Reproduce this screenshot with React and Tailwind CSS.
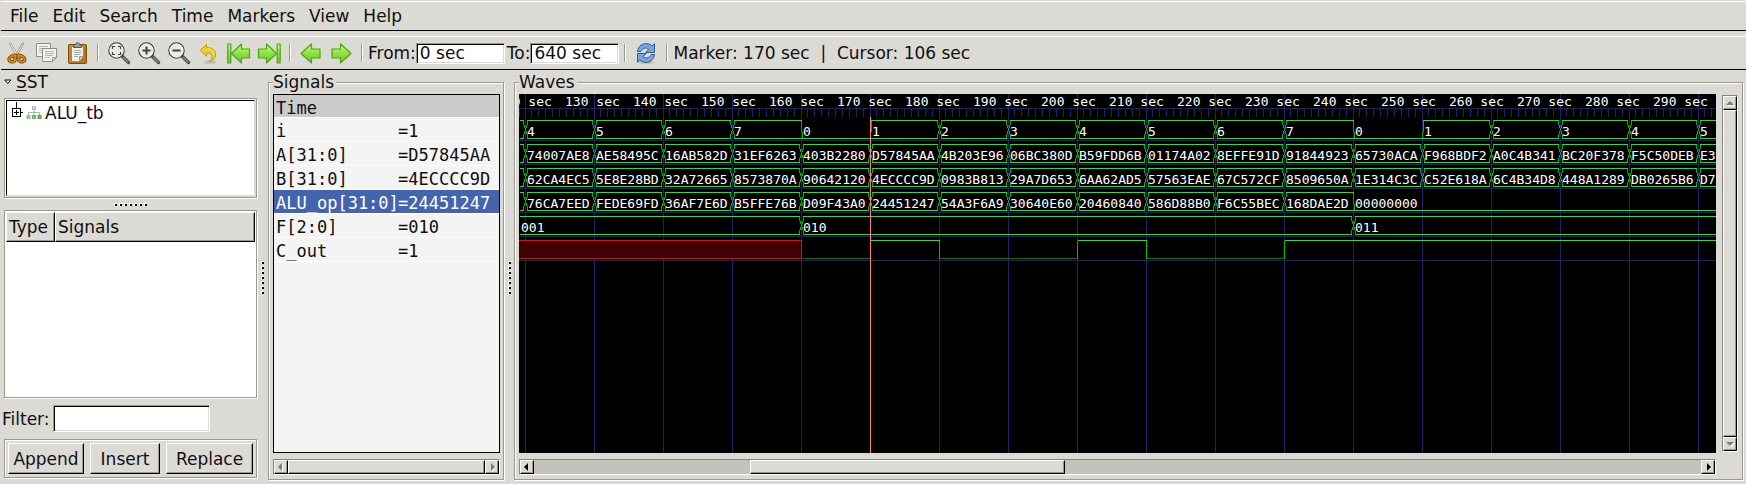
import React from 'react';

const etched = 'border border-[#9a988f] shadow-[1px_1px_0_#fff,inset_1px_1px_0_#fff]';
const raised =
  'border border-t-white border-l-white border-r-black border-b-black shadow-[inset_-1px_-1px_0_#9a988f] bg-[#dcdad5]';
const sunken =
  'border border-t-[#9a988f] border-l-[#9a988f] border-r-white border-b-white shadow-[inset_1px_1px_0_#000,inset_-1px_-1px_0_#dcdad5] bg-white';

/* ---------- toolbar icons ---------- */

function Icon({ children }) {
  return (
    <svg viewBox="0 0 24 24" className="h-6 w-6" aria-hidden="true">
      {children}
    </svg>
  );
}

const CutIcon = () => (
  <Icon>
    <path d="M4.2 2.2 5.6 2l8.3 13-1.8 1.6z" fill="#f4f4f2" stroke="#8c8e89" strokeWidth=".8" />
    <path d="M18.8 2.2 17.4 2 9.6 15l1.8 1.6z" fill="#e4e5e2" stroke="#8c8e89" strokeWidth=".8" />
    <g fill="none" strokeLinejoin="round">
      <path d="M10.6 14.2C9 14.8 4.6 14.8 4 18.6c-.2 2.6 5.600 3.200 6 .2z" stroke="#7a4700" strokeWidth="3.400" />
      <path d="M13.200 14.200c1.600.6 6 .6 6.600 4.400.2 2.600-5.600 3.200-6 .2z" stroke="#7a4700" strokeWidth="3.400" />
      <path d="M10.600 14.200C9 14.800 4.600 14.800 4 18.600c-.2 2.600 5.600 3.200 6 .2z" stroke="#d08a1c" strokeWidth="1.900" />
      <path d="M13.200 14.200c1.600.6 6 .6 6.600 4.400.2 2.600-5.600 3.200-6 .2z" stroke="#d08a1c" strokeWidth="1.900" />
    </g>
  </Icon>
);

function Sheet({ d, fold }) {
  return (
    <g strokeLinejoin="round">
      <path d={d} fill="#f2f2f0" stroke="#8b8d88" />
      <path d={fold} fill="#d3d4d0" stroke="#8b8d88" strokeWidth=".8" />
    </g>
  );
}

const CopyIcon = () => (
  <Icon>
    <Sheet d="M1.500 2.500h14v9l-3 4h-11z" fold="M15.500 11.500h-3v4z" />
    <path d="M4 5.500h9M4 7.500h9M4 9.500h6M4 11.500h6" stroke="#b5b6b2" fill="none" />
    <Sheet d="M7.500 7.500h14v9l-4 4h-10z" fold="M21.500 16.500h-4v4z" />
    <path d="M10 10.500h9M10 12.500h9M10 14.500h8M10 16.500h5" stroke="#b5b6b2" fill="none" />
  </Icon>
);

const PasteIcon = () => (
  <Icon>
    <rect x="3.500" y="3.500" width="18" height="19" rx="1" fill="#b87514" stroke="#7f4a05" />
    <path d="M5 21.500V5h15" stroke="#d39a44" fill="none" />
    <path d="M6.500 5.500h12v10l-4 5h-8z" fill="#f0f0ee" stroke="#8b8d88" />
    <path d="M18.500 15.500h-4v5z" fill="#c9cac6" stroke="#8b8d88" strokeWidth=".8" />
    <path d="M9 9.500h7M9 11.500h7M9 13.500h6M9 15.500h4" stroke="#a9aaa6" fill="none" />
    <path d="M8.500 6.500v-2l2-1c.4-2.600 3.600-2.600 4 0l2 1v2z" fill="#9b9c98" stroke="#555753" />
  </Icon>
);

function Magnifier({ children }) {
  return (
    <Icon>
      <path d="m15.500 15.500 6 6" stroke="#4b4e4a" strokeWidth="3.400" strokeLinecap="round" />
      <path d="m16.500 16.500 4.500 4.500" stroke="#8e918d" strokeWidth="1.200" strokeLinecap="round" />
      <circle cx="9.500" cy="9.500" r="7.600" fill="#e9ebe8" stroke="#3f423e" strokeWidth="1.300" />
      <circle cx="9.500" cy="9.500" r="6.600" fill="none" stroke="#fbfbfa" strokeWidth=".8" />
      {children}
    </Icon>
  );
}

const ZoomFitIcon = () => (
  <Magnifier>
    <path
      d="M5.500 8V5.500H8M11 5.500h2.500V8M13.500 11v2.500H11M8 13.500H5.500V11"
      fill="none"
      stroke="#3f423e"
      strokeWidth="1.200"
    />
  </Magnifier>
);
const ZoomInIcon = () => (
  <Magnifier>
    <path d="M5.500 9.500h8M9.500 5.500v8" stroke="#3f423e" strokeWidth="2" />
  </Magnifier>
);
const ZoomOutIcon = () => (
  <Magnifier>
    <path d="M5.500 9.500h8" stroke="#3f423e" strokeWidth="2" />
  </Magnifier>
);

const UndoIcon = () => (
  <Icon>
    <ellipse cx="13" cy="21" rx="6.500" ry="2" fill="#c4c2bb" />
    <path
      d="M3.200 9.300 9.500 3.500v3.200c6.500-.4 9.500 3.200 9 7.600-.3 3-2.800 5.600-6.300 6.500 2.600-2.600 3.200-4.600 2.500-6.600-.7-1.800-2.700-2.200-5.200-2v3.300z"
      fill="#f0cd28"
      stroke="#c09a10"
      strokeLinejoin="round"
    />
    <path d="M10.500 8c4.500-.2 6.800 2 6.600 5.600" stroke="#fbec94" fill="none" />
  </Icon>
);

function GreenDefs() {
  return (
    <svg width="0" height="0" className="absolute" aria-hidden="true">
      <defs>
        <linearGradient id="green" x1="0" y1="0" x2="0" y2="1">
          <stop offset="0" stopColor="#d2f4a6" />
          <stop offset=".5" stopColor="#8fe043" />
          <stop offset="1" stopColor="#6ccb20" />
        </linearGradient>
      </defs>
    </svg>
  );
}

const ARROW_LEFT = 'M2 12.500 12.500 3v5H21v9h-8.500v5z';
const ARROW_RIGHT = 'M22 12.500 11.500 3v5H3v9h8.500v5z';
const greenStroke = { fill: 'url(#green)', stroke: '#4aa512', strokeWidth: 1.2, strokeLinejoin: 'round' };

const LeftIcon = () => (
  <Icon>
    <path d={ARROW_LEFT} {...greenStroke} />
  </Icon>
);
const RightIcon = () => (
  <Icon>
    <path d={ARROW_RIGHT} {...greenStroke} />
  </Icon>
);
const FirstIcon = () => (
  <Icon>
    <path d="M4.500 12.500 14.500 3v5h8v9h-8v5z" {...greenStroke} />
    <path d="M.8 3h3v19h-3z" {...greenStroke} />
  </Icon>
);
const LastIcon = () => (
  <Icon>
    <path d="M19.500 12.500 9.500 3v5h-8v9h8v5z" {...greenStroke} />
    <path d="M20.200 3h3v19h-3z" {...greenStroke} />
  </Icon>
);

const ReloadIcon = () => (
  <Icon>
    <ellipse cx="12" cy="21.500" rx="8" ry="1.500" fill="#bdbbb5" />
    <g fill="#7aa5d8" stroke="#2f5a96" strokeLinejoin="round">
      <path d="M3.500 10.500C4 5 9 1.800 14 2.800c1.800.4 3 1.200 4 2.200l2.500-2.300v8.800h-8.700l3-3c-2.800-2.500-6.300-1.500-8 2z" />
      <path d="M20.500 13.500c-.5 5.500-5.500 8.700-10.500 7.700-1.800-.4-3-1.200-4-2.200l-2.500 2.300v-8.800h8.700l-3 3c2.800 2.500 6.300 1.500 8-2z" />
    </g>
  </Icon>
);

function ToolButton({ label, children }) {
  return (
    <button type="button" aria-label={label} className="flex h-7 w-[30px] items-center justify-center">
      {children}
    </button>
  );
}

function Divider() {
  return <div className="mx-[5px] h-[18px] w-0.5 border-l border-r border-l-[#9a988f] border-r-white" />;
}

function TimeEntry({ label, value }) {
  return (
    <label className="flex items-center">
      {label}
      <input type="text" defaultValue={value} className={`h-[21px] w-[89px] pl-[3px] outline-none ${sunken}`} />
    </label>
  );
}

function Toolbar() {
  return (
    <div className="mt-[5px] ml-px flex h-[34px] shrink-0 items-center border-t border-b border-t-white border-b-black pl-px">
      <ToolButton label="Cut"><CutIcon /></ToolButton>
      <ToolButton label="Copy"><CopyIcon /></ToolButton>
      <ToolButton label="Paste"><PasteIcon /></ToolButton>
      <Divider />
      <ToolButton label="Zoom fit"><ZoomFitIcon /></ToolButton>
      <ToolButton label="Zoom in"><ZoomInIcon /></ToolButton>
      <ToolButton label="Zoom out"><ZoomOutIcon /></ToolButton>
      <ToolButton label="Zoom undo"><UndoIcon /></ToolButton>
      <ToolButton label="Zoom to start"><FirstIcon /></ToolButton>
      <ToolButton label="Zoom to end"><LastIcon /></ToolButton>
      <Divider />
      <ToolButton label="Previous edge"><LeftIcon /></ToolButton>
      <ToolButton label="Next edge"><RightIcon /></ToolButton>
      <Divider />
      <div className="flex gap-0.5">
        <TimeEntry label="From:" value="0 sec" />
        <TimeEntry label="To:" value="640 sec" />
      </div>
      <Divider />
      <ToolButton label="Reload"><ReloadIcon /></ToolButton>
      <Divider />
      <span className="whitespace-pre">Marker: 170 sec  |  Cursor: 106 sec</span>
    </div>
  );
}

/* ---------- small shared parts ---------- */

function Grip({ vertical = false }) {
  return (
    <div className={`flex items-center justify-center gap-0.5 ${vertical ? 'flex-col' : ''}`} aria-hidden="true">
      {Array.from({ length: 7 }, (_, i) => (
        <span
          key={i}
          className="h-[3px] w-[3px] border-t border-l border-white bg-black"
        />
      ))}
    </div>
  );
}

const ARROWS = {
  left: 'M6 1v8L2 5z',
  right: 'M4 1v8l4-4z',
  up: 'M1 7h8L5 3z',
  down: 'M1 3h8L5 7z',
};

function ScrollButton({ dir, disabled = false }) {
  return (
    <button
      type="button"
      aria-label={`Scroll ${dir}`}
      className={`flex h-3.5 w-3.5 shrink-0 items-center justify-center ${raised}`}
    >
      <svg viewBox="0 0 10 10" className="h-2.5 w-2.5" aria-hidden="true">
        {disabled && <path d={ARROWS[dir]} fill="#fff" transform="translate(1 1)" />}
        <path d={ARROWS[dir]} fill={disabled ? '#7d7b75' : '#000'} />
      </svg>
    </button>
  );
}

const trough = 'flex shrink-0 border border-t-[#86847d] border-l-[#86847d] border-r-white border-b-white bg-[#c4c2bc]';

function Panel({ title, className, children }) {
  return (
    <fieldset className={`mb-1 flex min-w-0 flex-col pb-1 pl-1 ${etched} ${className}`}>
      <legend className="h-6 bg-[#dcdad5] pr-0.5 leading-6">{title}</legend>
      {children}
    </fieldset>
  );
}

/* ---------- left column ---------- */

function HierarchyIcon() {
  return (
    <svg viewBox="0 0 16 16" className="h-4 w-4" aria-hidden="true">
      <path d="M8 5v3M2.500 10V7.500h11V10M8 8v2" fill="none" stroke="#b0b0b0" />
      <rect x="6.500" y="1.500" width="3" height="3" fill="#b9d6f4" stroke="#9cbfe4" />
      <rect x="1" y="10.500" width="3" height="3" fill="#a3d89f" stroke="#86c582" />
      <rect x="6.500" y="10.500" width="3" height="3" fill="#84ca7f" stroke="#68b463" />
      <rect x="12" y="10.500" width="3" height="3" fill="#6cbf66" stroke="#50a44b" />
    </svg>
  );
}

function SstColumn() {
  return (
    <section className="ml-1 flex w-[253px] shrink-0 flex-col">
      <div className="flex h-6 items-center gap-1">
        <svg viewBox="0 0 8 6" className="h-1.5 w-2" aria-hidden="true">
          <path d="M.8 1h6L3.800 4.500z" fill="#fff" stroke="#000" />
        </svg>
        <h2><span className="underline underline-offset-2">S</span>ST</h2>
      </div>

      <div className={`mt-1 h-[100px] p-px ${etched}`}>
        <div className="h-full border border-t-black border-l-black border-r-[#dcdad5] border-b-[#dcdad5] bg-white">
          <div className="flex h-6 items-center pl-1" role="treeitem" aria-expanded="false">
            <svg viewBox="0 0 12 22" className="mr-[3px] h-[22px] w-3" aria-hidden="true">
              <g fill="none" stroke="#000" shapeRendering="crispEdges">
                <path d="M5.500 0v6M10 10.500h2M1.500 6.500h8v8h-8zM3 10.500h5M5.500 8v5" />
              </g>
            </svg>
            <HierarchyIcon />
            <span className="pl-[3px]">ALU_tb</span>
          </div>
        </div>
      </div>

      <div className="flex h-3 items-center justify-center"><Grip /></div>

      <div className={`min-h-0 flex-1 bg-white p-px ${etched}`}>
        <table className="w-full border-separate border-spacing-0 text-left">
          <thead>
            <tr className="h-[30px]">
              <th className={`w-[49px] pl-0.5 font-normal ${raised}`}>Type</th>
              <th className={`pl-0.5 font-normal ${raised}`}>Signals</th>
            </tr>
          </thead>
          <tbody />
        </table>
      </div>

      <div className="-ml-0.5 flex items-center gap-[3px] py-[7px]">
        <label htmlFor="filter">Filter:</label>
        <input id="filter" type="text" className={`h-[27px] w-[157px] px-1 outline-none ${sunken}`} />
      </div>

      <div className={`mb-1.5 flex h-[39px] items-center justify-between px-[3px] ${etched}`}>
        <button type="button" className={`h-[31px] w-[76px] ${raised}`}>Append</button>
        <button type="button" className={`h-[31px] w-[70px] ${raised}`}>Insert</button>
        <button type="button" className={`h-[31px] w-[87px] ${raised}`}>Replace</button>
      </div>
    </section>
  );
}

/* ---------- signal list ---------- */

const SIGNALS = [
  ['i', '1'],
  ['A[31:0]', 'D57845AA'],
  ['B[31:0]', '4ECCCC9D'],
  ['ALU_op[31:0]', '24451247'],
  ['F[2:0]', '010'],
  ['C_out', '1'],
];

function SignalList() {
  return (
    <Panel title="Signals" className="w-[236px] shrink-0 pr-[3px]">
      <div id="signals" className="min-h-0 flex-1 overflow-hidden border border-black bg-[#f4f4f4] font-['DejaVu_Sans_Mono',monospace]">
        <div className="h-[23px] border-b border-white bg-[#cbcbcb] pl-0.5 leading-[26px]">Time</div>
        {SIGNALS.map(([name, value]) => (
          <div
            key={name}
            className={`flex h-6 border-b border-white pl-0.5 leading-[26px] ${
              name === 'ALU_op[31:0]' ? 'bg-[#4464ac] text-white' : ''
            }`}
          >
            <span className="w-[122px] shrink-0">{name}</span>
            <span>={value}</span>
          </div>
        ))}
      </div>
      <div className={`mt-1.5 h-4 ${trough}`} role="scrollbar" aria-controls="signals" aria-valuenow={0}>
        <ScrollButton dir="left" disabled />
        <div className={`h-3.5 flex-1 ${raised}`} />
        <ScrollButton dir="right" disabled />
      </div>
    </Panel>
  );
}

/* ---------- waveforms ---------- */

const STEP = 69;
const LABEL_STEP = 68;
const END = 1196;
const gx = (k) => 6 + STEP * k;

// Each bus is a list of [grid index, value] changes.
const seq = (start, values) => values.map((v, n) => [start + n, v]);
const BUSES = [
  [[-1, ''], ...seq(0, ['4', '5', '6', '7', '0', '1', '2', '3', '4', '5', '6', '7', '0', '1', '2', '3', '4', '5'])],
  [
    [-1, ''],
    ...seq(0, [
      '74007AE8', 'AE58495C', '16AB582D', '31EF6263', '403B2280', 'D57845AA', '4B203E96', '06BC380D', 'B59FDD6B',
      '01174A02', '8EFFE91D', '91844923', '65730ACA', 'F968BDF2', 'A0C4B341', 'BC20F378', 'F5C50DEB', 'E3',
    ]),
  ],
  [
    [-1, ''],
    ...seq(0, [
      '62CA4EC5', '5E8E28BD', '32A72665', '8573870A', '90642120', '4ECCCC9D', '0983B813', '29A7D653', '6AA62AD5',
      '57563EAE', '67C572CF', '8509650A', '1E314C3C', 'C52E618A', '6C4B34D8', '448A1289', 'DB0265B6', 'D7',
    ]),
  ],
  [
    [-1, ''],
    ...seq(0, [
      '76CA7EED', 'FEDE69FD', '36AF7E6D', 'B5FFE76B', 'D09F43A0', '24451247', '54A3F6A9', '30640E60', '20460840',
      '586D88B0', 'F6C55BEC', '168DAE2D', '00000000',
    ]),
  ],
  [[-1, '001'], [4, '010'], [12, '011']],
];

const isZero = (v) => v === '0' || v === '00000000';

function Bus({ row, changes }) {
  const top = 26 + 24 * row;
  const bottom = top + 18;
  let rails = '';
  let edges = '';
  changes.forEach(([k, value], n) => {
    const first = n === 0;
    const last = n === changes.length - 1;
    const zero = isZero(value);
    const nextZero = !last && isZero(changes[n + 1][1]);
    const prevZero = !first && isZero(changes[n - 1][1]);
    const a = first ? 1 : gx(k);
    const b = last ? END : gx(changes[n + 1][0]);
    const ta = first ? a : a + (prevZero ? 1 : 2);
    const tb = last ? b : b - (nextZero ? 0 : 2);
    const ba = first ? a : zero || prevZero ? a : a + 2;
    const bb = last ? b : zero || nextZero ? b : b - 2;
    if (!zero) rails += `M${ta} ${top}H${tb}`;
    rails += `M${ba} ${bottom}H${bb}`;
    if (first) return;
    if (zero) edges += `M${a} ${top}V${top + 5}L${a + 1} ${bottom}`;
    else if (prevZero) edges += `M${a + 1} ${top}V${top + 5}L${a} ${bottom}`;
    else {
      edges += `M${a - 2} ${top}V${top + 3}L${a + 2} ${bottom - 3}V${bottom}`;
      edges += `M${a + 2} ${top}V${top + 3}L${a - 2} ${bottom - 3}V${bottom}`;
    }
  });
  return (
    <g>
      <g transform="translate(.5 .5)" fill="none" shapeRendering="crispEdges">
        <path d={edges} stroke="#00b400" />
        <path d={rails} stroke="#00ff00" strokeLinecap="square" />
      </g>
      {changes.map(([k, value]) => (
        <text key={k} x={k < 0 ? 2 : gx(k) + 2} y={bottom - 2}>
          {value}
        </text>
      ))}
    </g>
  );
}

function WaveView() {
  const grid = Array.from({ length: 18 }, (_, k) => gx(k));
  let ticks = 'M0 14V22';
  grid.forEach((x) => {
    for (let n = 1; n < 10; n += 1) if (x + 7 * n - 1 < 1197) ticks += `M${x + 7 * n - 1} 14V22`;
  });
  return (
    <svg
      role="img"
      aria-label="Signal waveforms"
      className="block h-full w-full font-['DejaVu_Sans_Mono',monospace] text-[13px]"
      fill="#fff"
    >
      <g fill="#20206e" shapeRendering="crispEdges">
        {grid.map((x) => (
          <rect key={x} x={x} y="0" width="1" height="100%" />
        ))}
        <rect x="0" y="14" width="100%" height="1" />
        {[0, 1, 2, 3, 4, 5].map((r) => (
          <rect key={r} x="0" y={46 + 24 * r} width="100%" height="1" />
        ))}
      </g>
      <path d={ticks} stroke="#20206e" transform="translate(.5 .5)" shapeRendering="crispEdges" />
      {Array.from({ length: 18 }, (_, j) => (
        <text key={j} x={46 + LABEL_STEP * (j - 1)} y="12">
          {120 + 10 * j} sec
        </text>
      ))}
      {BUSES.map((changes, row) => (
        <Bus key={row} row={row} changes={changes} />
      ))}
      <g transform="translate(.5 .5)" fill="none" shapeRendering="crispEdges">
        <path d={`M-2 146H${gx(4)}V164H-2z`} fill="#400000" stroke="#ff0000" />
        <path
          d={`M${gx(4) + 1} 164H${gx(5)}M${gx(6)} 164H${gx(8)}M${gx(9)} 164H${gx(11)}`}
          stroke="#008200"
        />
        <path
          d={`M${gx(5)} 146V164M${gx(6)} 146V164M${gx(8)} 146V164M${gx(9)} 146V164M${gx(11)} 146V164`}
          stroke="#00c000"
        />
        <path d={`M${gx(5)} 146H${gx(6)}M${gx(8)} 146H${gx(9)}M${gx(11)} 146H${END + 1}`} stroke="#00ff00" />
      </g>
      <rect x={gx(5)} y="23" width="1" height="100%" fill="#ff8080" shapeRendering="crispEdges" />
    </svg>
  );
}

function Waves() {
  return (
    <Panel title="Waves" className="mr-[3px] flex-1 pr-1">
      <div className="flex min-h-0 flex-1 gap-1.5">
        <div id="waves" className="min-w-0 flex-1 overflow-hidden bg-black">
          <WaveView />
        </div>
        <div className={`mt-px mb-px w-4 flex-col ${trough}`} role="scrollbar" aria-orientation="vertical" aria-controls="waves" aria-valuenow={0}>
          <ScrollButton dir="up" disabled />
          <div className={`w-3.5 flex-1 ${raised}`} />
          <ScrollButton dir="down" disabled />
        </div>
      </div>
      <div className={`mt-1.5 mr-[22px] h-4 ${trough}`} role="scrollbar" aria-orientation="horizontal" aria-controls="waves" aria-valuenow={20}>
        <ScrollButton dir="left" />
        <div className="flex flex-1">
          <div className="w-[18.5%]" />
          <div className={`h-3.5 w-[27%] ${raised}`} />
        </div>
        <ScrollButton dir="right" />
      </div>
    </Panel>
  );
}

/* ---------- window ---------- */

const MENUS = ['File', 'Edit', 'Search', 'Time', 'Markers', 'View', 'Help'];

export default function App() {
  return (
    <div className="flex h-screen flex-col bg-[#dcdad5] font-['DejaVu_Sans',sans-serif] text-[17px] leading-5 text-[#101010]">
      <GreenDefs />
      <nav className="mt-px ml-px flex h-[30px] shrink-0 items-center gap-3.5 border-t border-b border-t-white border-b-black pl-[9px]">
        {MENUS.map((name) => (
          <button key={name} type="button">{name}</button>
        ))}
      </nav>
      <Toolbar />
      <main className="flex min-h-0 flex-1">
        <SstColumn />
        <div className="flex w-[11px] shrink-0 items-center justify-center"><Grip vertical /></div>
        <SignalList />
        <div className="flex w-2.5 shrink-0 items-center justify-center"><Grip vertical /></div>
        <Waves />
      </main>
    </div>
  );
}
